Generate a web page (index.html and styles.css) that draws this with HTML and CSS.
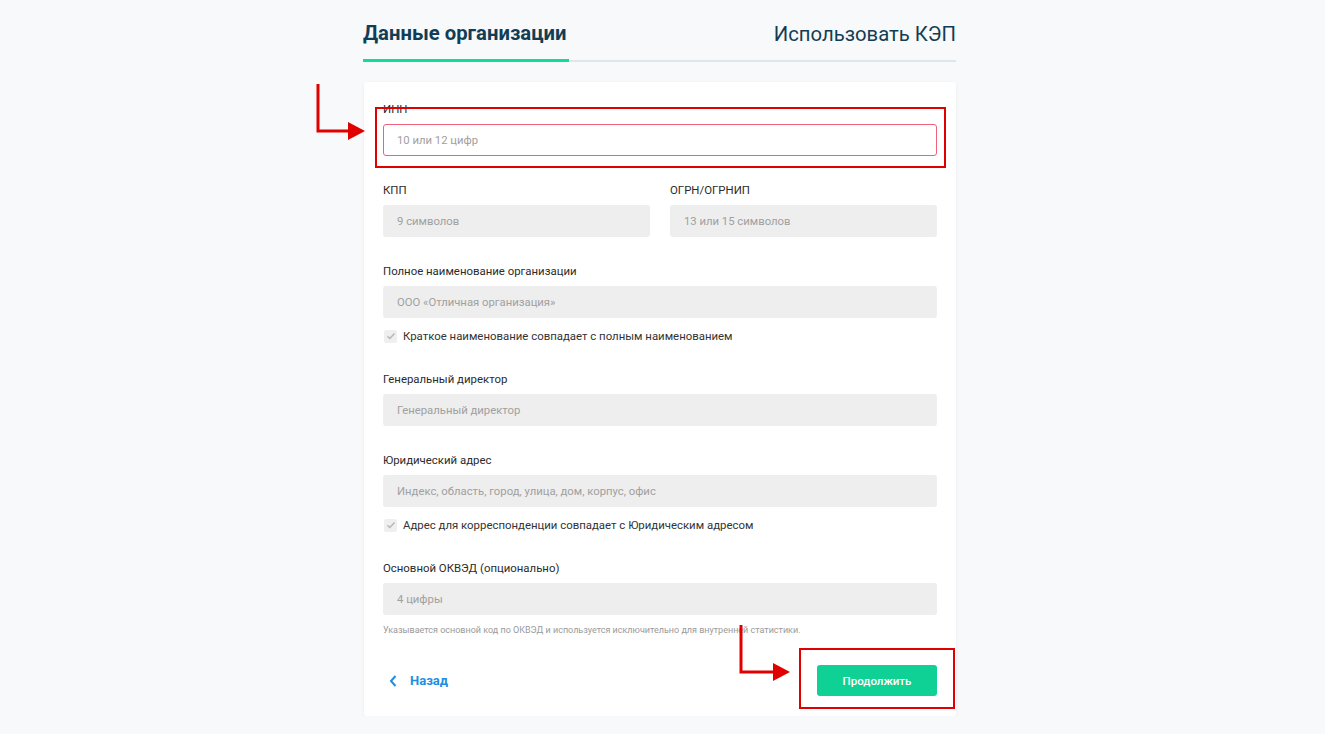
FILE: index.html
```html
<!DOCTYPE html>
<html lang="ru">
<head>
    <meta charset="UTF-8">
    <meta name="viewport" content="width=device-width, initial-scale=1.0">
    <title>Данные организации</title>
    <link rel="stylesheet" href="styles.css">
</head>
<body>
    <div class="page">
        <div class="tabs">
            <div class="tab active">Данные организации</div>
            <div class="tab">Использовать КЭП</div>
        </div>

        <form class="card">
            <div class="field">
                <label for="inn">ИНН</label>
                <input type="text" id="inn" class="input-error" placeholder="10 или 12 цифр">
            </div>

            <div class="row">
                <div class="field">
                    <label for="kpp">КПП</label>
                    <input type="text" id="kpp" placeholder="9 символов">
                </div>
                <div class="field">
                    <label for="ogrn">ОГРН/ОГРНИП</label>
                    <input type="text" id="ogrn" placeholder="13 или 15 символов">
                </div>
            </div>

            <div class="field">
                <label for="fullname">Полное наименование организации</label>
                <input type="text" id="fullname" placeholder="ООО «Отличная организация»">
            </div>
            <div class="check">
                <span class="box">
                    <svg width="12" height="12" viewBox="0 0 12 12"><path d="M2.5 6.2l2.3 2.3 4.7-5" fill="none" stroke="#b5b5b5" stroke-width="1.4"/></svg>
                </span>
                Краткое наименование совпадает с полным наименованием
            </div>

            <div class="field">
                <label for="ceo">Генеральный директор</label>
                <input type="text" id="ceo" placeholder="Генеральный директор">
            </div>

            <div class="field">
                <label for="address">Юридический адрес</label>
                <input type="text" id="address" placeholder="Индекс, область, город, улица, дом, корпус, офис">
            </div>
            <div class="check">
                <span class="box">
                    <svg width="12" height="12" viewBox="0 0 12 12"><path d="M2.5 6.2l2.3 2.3 4.7-5" fill="none" stroke="#b5b5b5" stroke-width="1.4"/></svg>
                </span>
                Адрес для корреспонденции совпадает с Юридическим адресом
            </div>

            <div class="field last">
                <label for="okved">Основной ОКВЭД (опционально)</label>
                <input type="text" id="okved" placeholder="4 цифры">
            </div>
            <p class="hint">Указывается основной код по ОКВЭД и используется исключительно для внутренней статистики.</p>

            <div class="footer">
                <a href="#" class="back">
                    <svg width="8" height="12" viewBox="0 0 8 12"><path d="M6.5 1L2 6l4.5 5" fill="none" stroke="#1e8ee0" stroke-width="2"/></svg>
                    Назад
                </a>
                <button type="submit">Продолжить</button>
            </div>
        </form>

        <!-- annotation overlay -->
        <svg class="marks" width="593" height="734" viewBox="0 0 593 734">
            <rect x="13" y="108" width="569" height="59" fill="none" stroke="#e10000" stroke-width="2"/>
            <rect x="437" y="649" width="154" height="59" fill="none" stroke="#e10000" stroke-width="2"/>
            <path d="M-45 84V131H-14" fill="none" stroke="#e10000" stroke-width="3"/>
            <path d="M-15 122L2 131L-15 140Z" fill="#e10000"/>
            <path d="M378 625V672H411" fill="none" stroke="#e10000" stroke-width="3"/>
            <path d="M410 663L427 672L410 681Z" fill="#e10000"/>
        </svg>
    </div>
</body>
</html>
```

FILE: styles.css
```css
body {
    margin: 0;
    background: #f8f9fa;
    font-family: Roboto, "Liberation Sans", Arial, sans-serif;
    color: #2b2b2b;
}
.page {
    position: relative;
    width: 593px;
    padding-right: 6px;
    margin: 0 auto;
}
.tabs {
    display: flex;
    justify-content: space-between;
    align-items: flex-end;
    padding-top: 21px;
    border-bottom: 2px solid #dde6ec;
}
.tab {
    font-size: 20.3px;
    line-height: 24px;
    color: #123d55;
    padding-bottom: 14px;
}
.tab.active {
    font-weight: 700;
    padding-right: 2px;
    border-bottom: 3px solid #0fdc98;
    margin-bottom: -2px;
}
.card {
    margin-top: 20px;
    margin-left: 1px;
    background: #fff;
    border-radius: 3px;
    box-shadow: 0 1px 4px rgba(0, 0, 0, 0.06);
    padding: 20px 19px;
}
.row {
    display: flex;
    gap: 20px;
}
.row .field {
    flex: 1;
}
.field {
    display: flex;
    flex-direction: column;
    margin-bottom: 27px;
}
.field label {
    font-size: 11.4px;
    line-height: 14px;
    margin-bottom: 8px;
}
.field input {
    height: 32px;
    box-sizing: border-box;
    border: 1px solid transparent;
    border-radius: 3px;
    background: #eeeeee;
    padding: 0 13px;
    font-family: inherit;
    font-size: 11.3px;
    color: #2b2b2b;
}
.field input::placeholder {
    color: #a0a0a0;
}
.field input.input-error {
    background: #fff;
    border-color: #f2607a;
}
.check {
    display: flex;
    align-items: center;
    gap: 6px;
    font-size: 11.4px;
    line-height: 14px;
    color: #333;
    margin: -16px 0 29px 1px;
}
.check .box {
    width: 13px;
    height: 13px;
    border-radius: 2px;
    background: #efefef;
    display: flex;
    align-items: center;
    justify-content: center;
}
.field.last {
    margin-bottom: 0;
}
.hint {
    font-size: 9px;
    line-height: 11px;
    color: #9a9a9a;
    margin: 10px 0 0;
}
.footer {
    display: flex;
    justify-content: space-between;
    align-items: center;
    margin-top: 29px;
}
.back {
    display: flex;
    align-items: center;
    gap: 13px;
    padding-left: 6px;
    color: #1e8ee0;
    font-size: 13px;
    font-weight: 700;
    text-decoration: none;
}
.footer button {
    width: 120px;
    height: 31px;
    border: none;
    border-radius: 3px;
    background: #0fd195;
    color: #fff;
    font-family: inherit;
    font-size: 11.5px;
    font-weight: 500;
    cursor: pointer;
}
.marks {
    position: absolute;
    left: 0;
    top: 0;
    overflow: visible;
    pointer-events: none;
}
```
